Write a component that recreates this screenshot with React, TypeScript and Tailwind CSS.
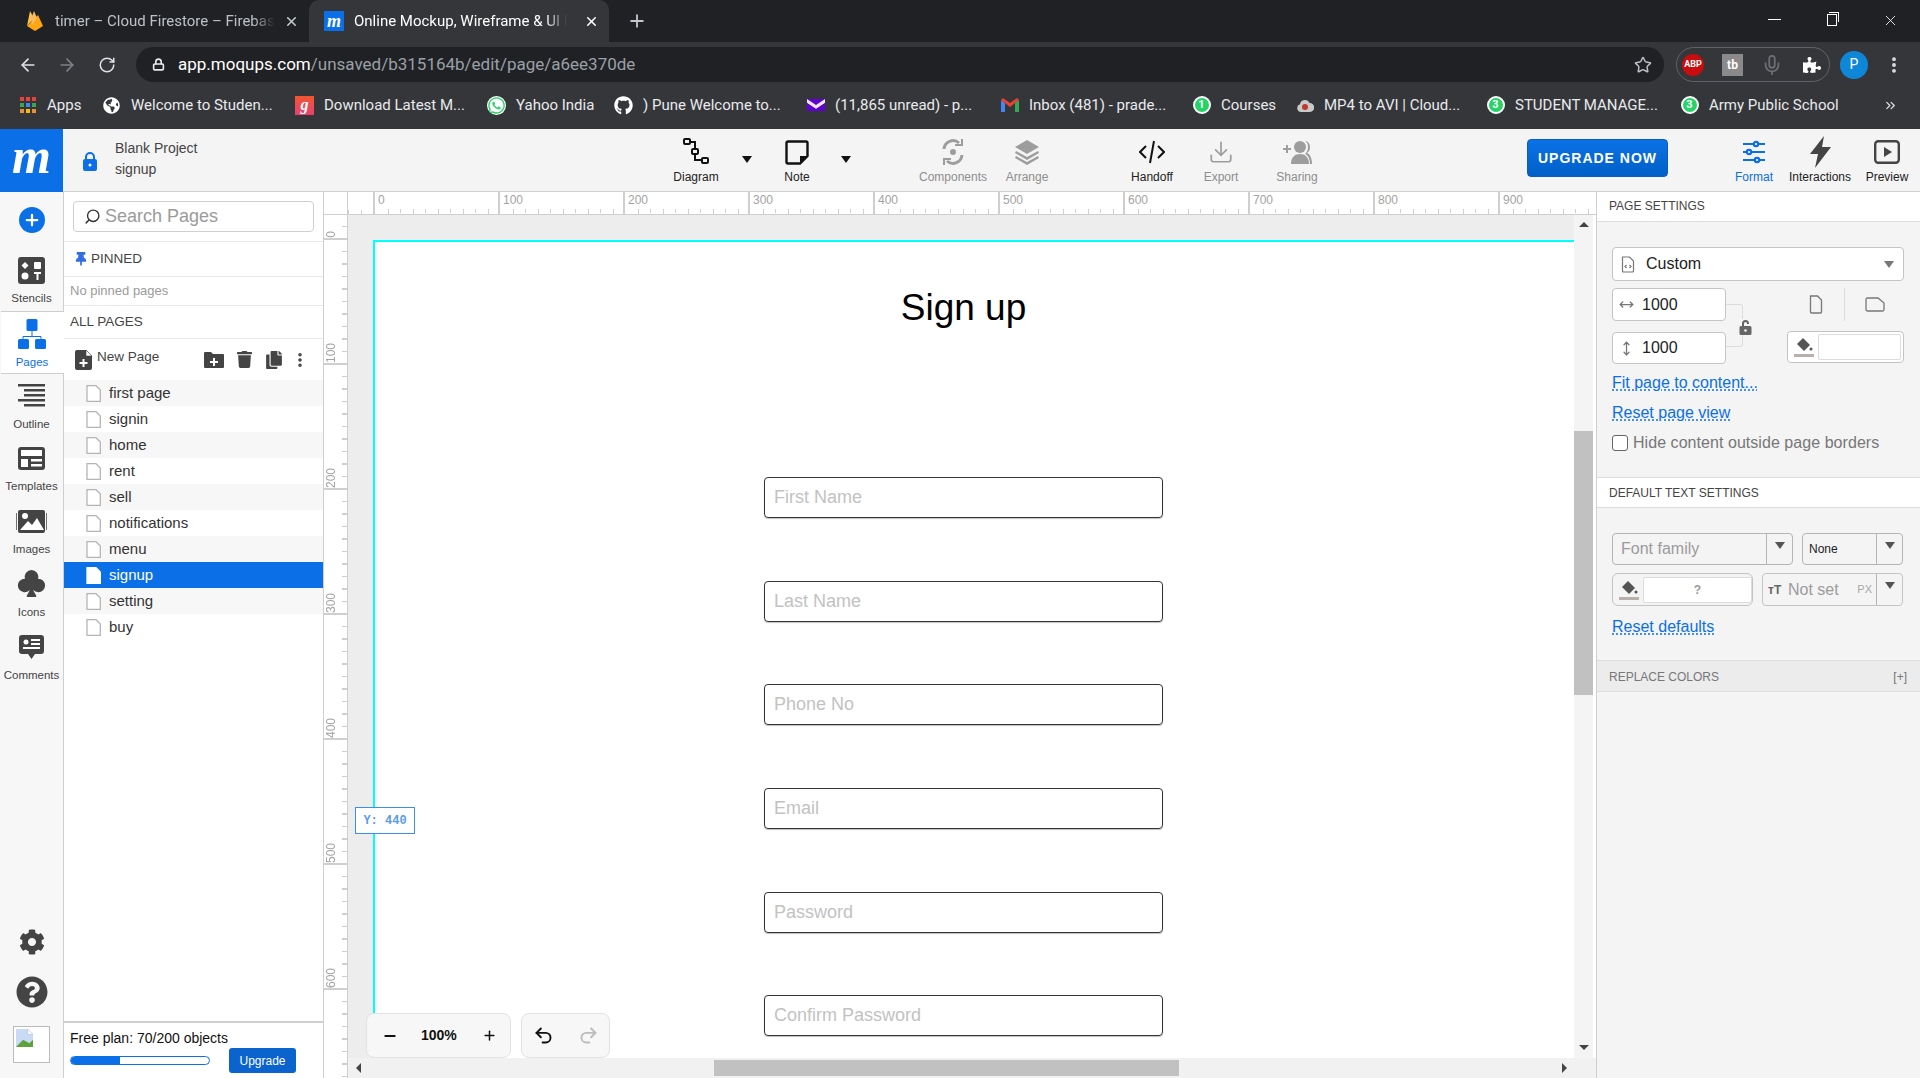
import React from 'react';
import { ArrowLeft, ArrowRight, RotateCw, Plus, X, Star, Minus, Undo2, Redo2, Download, ChevronsRight, Mic, EllipsisVertical, Lock, Search, MoveHorizontal, MoveVertical } from 'lucide-react';
import { FaCog, FaQuestionCircle, FaGithub, FaWhatsapp, FaThumbtack, FaGlobeAmericas, FaPuzzlePiece, FaTrash, FaCopy } from 'react-icons/fa';
import { BsSuitClubFill } from 'react-icons/bs';

const UI_FONT = "font-['Liberation_Sans',Arial,sans-serif]";

const bookmarks = [
    { label: 'Apps', width: 'w-[84px]', icon: 'apps' },
    { label: 'Welcome to Studen...', width: 'w-[193px]', icon: 'globe' },
    { label: 'Download Latest M...', width: 'w-[192px]', icon: 'gaana' },
    { label: 'Yahoo India', width: 'w-[127px]', icon: 'wa' },
    { label: ') Pune Welcome to...', width: 'w-[192px]', icon: 'github' },
    { label: '(11,865 unread) - p...', width: 'w-[194px]', icon: 'yahoo' },
    { label: 'Inbox (481) - prade...', width: 'w-[192px]', icon: 'gmail' },
    { label: 'Courses', width: 'w-[103px]', icon: 'wa1' },
    { label: 'MP4 to AVI | Cloud...', width: 'w-[191px]', icon: 'cloud' },
    { label: 'STUDENT MANAGE...', width: 'w-[194px]', icon: 'wa3' },
    { label: 'Army Public School', width: 'w-[170px]', icon: 'wa3' },
];

const pages = ['first page', 'signin', 'home', 'rent', 'sell', 'notifications', 'menu', 'signup', 'setting', 'buy'];
const fields = ['First Name', 'Last Name', 'Phone No', 'Email', 'Password', 'Confirm Password'];

const Caret = ({ className = 'border-t-[#333]' }: { className?: string }) => (
    <span className={`block w-0 h-0 border-x-[5px] border-x-transparent border-t-[7px] ${className}`} />
);

const BadgeNum = ({ n }: { n: string }) => (
    <span className="relative flex w-[18px] h-[18px] items-center justify-center rounded-full bg-[#25d366] text-[11px] font-bold text-white border-2 border-white">{n}</span>
);

const BookmarkIcon = ({ icon }: { icon: string }) => {
    switch (icon) {
        case 'apps':
            return (
                <svg width="16" height="16" viewBox="0 0 16 16">
                    {[0, 6, 12].map(y => [0, 6, 12].map((x, i) => (
                        <rect key={`${x}-${y}`} x={x} y={y} width="4" height="4" fill={y === 0 ? '#ea4335' : y === 6 ? (i === 1 ? '#4285f4' : '#34a853') : (i === 1 ? '#fbbc05' : '#ea8f35')} />
                    )))}
                </svg>
            );
        case 'globe':
            return <FaGlobeAmericas className="text-white" size={17} />;
        case 'gaana':
            return <span className="flex w-[19px] h-[19px] items-center justify-center bg-gradient-to-b from-[#f0562b] to-[#e83f6f] text-[16px] font-bold italic text-white font-['Liberation_Serif',serif]">g</span>;
        case 'wa':
            return <FaWhatsapp className="text-[#25d366] bg-white rounded-full" size={19} />;
        case 'wa1':
            return <BadgeNum n="1" />;
        case 'wa3':
            return <BadgeNum n="3" />;
        case 'github':
            return <FaGithub className="text-white" size={19} />;
        case 'yahoo':
            return (
                <svg width="18" height="16" viewBox="0 0 18 16">
                    <path d="M0 2h18v12H0z" fill="#6001d2" />
                    <path d="M0 2l9 6 9-6v4l-9 6-9-6z" fill="#fff" opacity="0.9" />
                    <path d="M0 6l9 6 9-6v8H0z" fill="#6001d2" />
                </svg>
            );
        case 'gmail':
            return (
                <svg width="18" height="14" viewBox="0 0 18 14">
                    <path d="M0 2v12h4V5z" fill="#4285f4" />
                    <path d="M18 2v12h-4V5z" fill="#34a853" />
                    <path d="M0 2l2-2 7 5 7-5 2 2-4 3-5 4-5-4z" fill="#ea4335" />
                </svg>
            );
        case 'cloud':
            return (
                <svg width="18" height="13" viewBox="0 0 18 13">
                    <path d="M5 13a4 4 0 0 1-1-7.800A5 5 0 0 1 13.500 4 4.500 4.500 0 0 1 14 13z" fill="#c9c9c9" />
                    <circle cx="9" cy="8" r="3" fill="#c0392b" />
                </svg>
            );
        default:
            return null;
    }
};

const TabStrip = () => (
    <div className="h-[42px] bg-[#202124] flex items-end flex-none font-['Roboto',sans-serif] text-[15px]">
        <div className="w-[309px] h-[42px] flex items-center pl-[27px] pr-[10px] text-[#bdc1c6]">
            <svg width="16" height="22" viewBox="0 0 16 22" className="flex-none">
                <path d="M0 16L3 1l4 7-7 8z" fill="#ffc24a" />
                <path d="M0 16L11 5l5 11-8 5z" fill="#ffa712" />
                <path d="M4 9l3-8 3 7-5 7z" fill="#f4bd62" />
            </svg>
            <span className="ml-[12px] w-[220px] whitespace-nowrap overflow-hidden [mask-image:linear-gradient(to_right,black_90%,transparent)]">timer – Cloud Firestore – Firebase</span>
            <X size={15} strokeWidth={2.5} className="ml-auto text-[#c4c7cb]" />
        </div>
        <div className="w-[300px] h-[42px] rounded-t-[10px] bg-[#35363a] flex items-center pl-[15px] pr-[10px] text-white">
            <span className="flex-none flex w-[20px] h-[20px] items-center justify-center bg-[#0b6fe8] text-[18px] leading-none font-bold italic font-['Liberation_Serif',serif]">m</span>
            <span className="ml-[10px] w-[213px] whitespace-nowrap overflow-hidden [mask-image:linear-gradient(to_right,black_90%,transparent)]">Online Mockup, Wireframe &amp; UI Mockup</span>
            <X size={15} strokeWidth={2.5} className="ml-auto text-white" />
        </div>
        <div className="h-[42px] flex items-center ml-[18px] text-[#c4c7cb]">
            <Plus size={20} strokeWidth={2.2} />
        </div>
        <div className="ml-auto h-[42px] flex items-start pt-[18px] text-white">
            <span className="block w-[13px] h-px bg-white mt-px mr-[46px]" />
            <span className="relative block w-[10px] h-[12px] border border-white mt-[-4px] mr-[45px]">
                <span className="absolute -top-[3px] -right-[3px] w-[10px] h-[10px] border-t border-r border-white" />
            </span>
            <X size={17} strokeWidth={1.2} className="mr-[21px] mt-[-6px]" />
        </div>
    </div>
);

const AddressBar = () => (
    <div className="h-[42px] bg-[#35363a] flex items-center flex-none pt-[3px] font-['Roboto',sans-serif]">
        <ArrowLeft size={20} className="ml-[18px] text-[#dee1e6]" />
        <ArrowRight size={20} className="ml-[19px] text-[#7d8085]" />
        <RotateCw size={18} className="ml-[21px] text-[#dee1e6]" />
        <div className="ml-[20px] w-[1528px] h-[35px] rounded-full bg-[#202124] flex items-center pl-[16px] pr-[12px] text-[17px]">
            <Lock size={13} strokeWidth={3} className="text-[#e8eaed]" />
            <span className="ml-[13px] text-white">app.moqups.com</span>
            <span className="text-[#9aa0a6]">/unsaved/b315164b/edit/page/a6ee370de</span>
            <Star size={18} className="ml-auto text-[#bdc1c6]" />
        </div>
        <div className="ml-[12px] w-[154px] h-[35px] rounded-full border border-[#5f6368] flex items-center pl-[5px]">
            <span className="flex w-[22px] h-[22px] items-center justify-center rounded-full bg-[#c70d0d] text-white text-[9px] font-bold">ABP</span>
            <span className="ml-[18px] flex w-[21px] h-[22px] items-center justify-center bg-[#8a8a8a] text-white text-[12px] font-bold">tb</span>
            <Mic size={22} className="ml-[18px] text-[#6b6e72]" />
            <FaPuzzlePiece size={18} className="ml-[20px] text-white" />
        </div>
        <span className="ml-[10px] flex w-[28px] h-[28px] items-center justify-center rounded-full bg-[#0f87d8] text-white text-[14px]">P</span>
        <EllipsisVertical size={20} strokeWidth={2.6} className="ml-[16px] text-[#dee1e6]" />
    </div>
);

const BookmarkBar = () => (
    <div className="h-[45px] bg-[#35363a] flex items-center pl-[18px] pb-[3px] flex-none text-[15px] text-[#e8eaed] font-['Roboto',sans-serif]">
        {bookmarks.map(b => (
            <div key={b.label} className={`${b.width} flex-none flex items-center`}>
                <span className="w-[19px] flex-none flex items-center justify-center"><BookmarkIcon icon={b.icon} /></span>
                <span className="ml-[10px] whitespace-nowrap">{b.label}</span>
            </div>
        ))}
        <ChevronsRight size={15} className="ml-auto mr-[22px] text-[#dee1e6]" />
    </div>
);

const DiagramIcon = () => (
    <svg width="26" height="28" viewBox="0 0 26 28" fill="none" stroke="#111" strokeWidth="2">
        <rect x="1" y="1" width="6" height="5" rx="1" />
        <rect x="9" y="11" width="6" height="5" rx="1" />
        <rect x="19" y="20" width="6" height="5" rx="1" />
        <path d="M7 4h5v7M12 16v6h7" />
    </svg>
);

const NoteIcon = () => (
    <svg width="24" height="25" viewBox="0 0 24 25" fill="none">
        <path d="M3 1.500h18a1.500 1.500 0 0 1 1.500 1.500v13L15 23.500H3A1.500 1.500 0 0 1 1.500 22V3A1.500 1.500 0 0 1 3 1.500z" stroke="#111" strokeWidth="2.400" />
        <path d="M15 23v-7h8z" fill="#111" />
    </svg>
);

const ComponentsIcon = () => (
    <svg width="26" height="28" viewBox="0 0 26 28" fill="none" stroke="#9d9d9d" strokeWidth="3">
        <path d="M4 11a9 9 0 0 1 15-6M22 17a9 9 0 0 1-15 6" />
        <path d="M15 7h7V1M11 21H4v6" strokeWidth="2" />
        <circle cx="13" cy="14" r="3" fill="#9d9d9d" stroke="none" />
    </svg>
);

const ArrangeIcon = () => (
    <svg width="26" height="26" viewBox="0 0 26 26" fill="#9d9d9d">
        <path d="M13 1l12 7-12 7L1 8z" />
        <path d="M2 12l11 6 11-6 1 2-12 7-12-7z" />
        <path d="M2 17l11 6 11-6 1 2-12 7-12-7z" />
    </svg>
);

const HandoffIcon = () => (
    <svg width="26" height="24" viewBox="0 0 26 24" fill="none" stroke="#111" strokeWidth="2">
        <path d="M7 6l-6 6 6 6M19 6l6 6-6 6M15 1l-4 22" />
    </svg>
);

const SharingIcon = () => (
    <svg width="32" height="24" viewBox="0 0 32 24" fill="#9d9d9d">
        <path d="M2 8h3V5h2v3h3v2H7v3H5v-3H2z" />
        <circle cx="19" cy="7" r="6" />
        <path d="M10 24c0-7 4-10 9-10s9 3 9 10z" />
        <path d="M24 1c3 0 5 3 5 6s-1 5-3 6c3 1 5 5 5 11h-2c0-5-2-9-5-10 2-2 3-4 3-7s-1-5-3-6z" />
    </svg>
);

const FormatIcon = () => (
    <svg width="24" height="24" viewBox="0 0 24 24" fill="#fff" stroke="#0b6fe8" strokeWidth="2.200">
        <path d="M1 4h22M1 12h22M1 20h22" />
        <circle cx="14" cy="4" r="2.200" />
        <circle cx="7" cy="12" r="2.200" />
        <circle cx="15" cy="20" r="2.200" />
    </svg>
);

const BoltIcon = () => (
    <svg width="21" height="32" viewBox="0 0 21 32" fill="#444">
        <path d="M14 0L0 18h8L5 32l16-21h-9z" />
    </svg>
);

const PreviewIcon = () => (
    <svg width="26" height="24" viewBox="0 0 26 24" fill="none">
        <rect x="1.200" y="1.200" width="23.600" height="21.600" rx="3" stroke="#444" strokeWidth="2.400" />
        <path d="M10 7l8 5-8 5z" fill="#444" />
    </svg>
);

const ToolButton = ({ label, width, icon, dim, active, ml }: { label: string; width: string; icon: React.ReactNode; dim?: boolean; active?: boolean; ml?: string }) => (
    <div className={`${width} ${ml ?? ''} flex-none h-full flex flex-col items-center`}>
        <div className="h-[36px] mt-[5px] flex items-center justify-center">{icon}</div>
        <span className={`text-[12px] leading-[14px] whitespace-nowrap ${active ? 'text-[#0b6fe8]' : dim ? 'text-[#8e8e8e]' : 'text-[#222]'}`}>{label}</span>
    </div>
);

const Header = () => (
    <div className="h-[63px] flex-none flex bg-[#f4f4f4] border-b border-[#cfcfcf]">
        <div className="w-[63px] h-[63px] flex-none bg-[#0b6fe8] flex items-center justify-center text-white text-[50px] leading-none pb-[10px] font-bold italic font-['Liberation_Serif',serif]">m</div>
        <svg width="16" height="20" viewBox="0 0 16 20" className="ml-[19px] mt-[22px] flex-none">
            <path d="M3 8V6a5 5 0 0 1 10 0v2h-2V6a3 3 0 0 0-6 0v2z" fill="#0b6fe8" />
            <rect x="1" y="8" width="14" height="12" rx="2" fill="#0b6fe8" />
            <circle cx="8" cy="14" r="1.500" fill="#fff" />
        </svg>
        <div className="ml-[17px] w-[199px] flex-none flex flex-col pt-[9px] text-[14px] leading-[21px] text-[#444]">
            <span>Blank Project</span>
            <span>signup</span>
        </div>
        <ToolButton label="Diagram" width="w-[70px]" ml="ml-[347px]" icon={<DiagramIcon />} />
        <div className="w-[32px] flex-none flex justify-center pt-[27px]"><Caret className="border-t-[#111]" /></div>
        <ToolButton label="Note" width="w-[68px]" icon={<NoteIcon />} />
        <div className="w-[30px] flex-none flex justify-center pt-[27px]"><Caret className="border-t-[#111]" /></div>
        <ToolButton label="Components" width="w-[76px]" ml="ml-[54px]" dim icon={<ComponentsIcon />} />
        <ToolButton label="Arrange" width="w-[72px]" dim icon={<ArrangeIcon />} />
        <ToolButton label="Handoff" width="w-[62px]" ml="ml-[58px]" icon={<HandoffIcon />} />
        <ToolButton label="Export" width="w-[76px]" dim icon={<Download size={26} strokeWidth={1.6} className="text-[#9d9d9d]" />} />
        <ToolButton label="Sharing" width="w-[76px]" dim icon={<SharingIcon />} />
        <div className="ml-[192px] mt-[10px] flex-none w-[141px] h-[38px] rounded-[4px] bg-gradient-to-b from-[#0b72e6] to-[#0060c8] border border-[#0a5cc0] flex items-center justify-center text-white text-[14px] font-bold tracking-[1px]">UPGRADE NOW</div>
        <ToolButton label="Format" width="w-[60px]" ml="ml-[56px]" active icon={<FormatIcon />} />
        <ToolButton label="Interactions" width="w-[72px]" icon={<BoltIcon />} />
        <ToolButton label="Preview" width="w-[62px]" icon={<PreviewIcon />} />
    </div>
);

const RailItem = ({ label, icon, active }: { label: string; icon: React.ReactNode; active?: boolean }) => (
    <div className={`h-[62.8px] w-full flex flex-col items-center ${active ? 'bg-white border-y border-[#cfcfcf] w-[64px] -mr-px z-10 relative' : ''}`}>
        <div className="h-[38px] mt-[3px] flex items-center justify-center">{icon}</div>
        <span className={`mt-[2px] text-[11.5px] leading-[15px] ${active ? 'text-[#0b6fe8]' : 'text-[#444]'}`}>{label}</span>
    </div>
);

const Rail = () => (
    <div className="w-[64px] flex-none bg-[#f7f7f7] border-r border-[#cfcfcf] flex flex-col items-center">
        <div className="h-[56px] flex items-center justify-center">
            <span className="flex w-[26px] h-[26px] items-center justify-center rounded-full bg-[#0b6fe8] text-white"><Plus size={18} strokeWidth={3} /></span>
        </div>
        <RailItem label="Stencils" icon={
            <svg width="27" height="27" viewBox="0 0 27 27">
                <rect width="27" height="27" rx="3" fill="#444" />
                <path d="M7 5l3.500 3.500L7 12 3.500 8.500z" fill="#fff" />
                <rect x="16" y="5" width="7" height="7" rx="1" fill="#fff" />
                <circle cx="7" cy="19" r="3.500" fill="#fff" />
                <path d="M16 15h7v2h-2.500v6h-2v-6H16z" fill="#fff" />
            </svg>
        } />
        <RailItem label="Pages" active icon={
            <svg width="28" height="30" viewBox="0 0 28 30" fill="#0b6fe8">
                <rect x="8.500" y="0" width="11" height="12" rx="1.500" />
                <path d="M14 12v5M5 21v-3.500h18V21" fill="none" stroke="#0b6fe8" strokeWidth="1" />
                <rect x="0" y="20" width="11" height="10" rx="1.500" />
                <rect x="17" y="20" width="11" height="10" rx="1.500" />
            </svg>
        } />
        <RailItem label="Outline" icon={
            <svg width="27" height="23" viewBox="0 0 27 23" fill="#444">
                <rect x="0" y="0" width="27" height="2.500" />
                <rect x="6" y="5" width="21" height="2.500" />
                <rect x="6" y="10" width="21" height="2.500" />
                <rect x="0" y="15" width="27" height="2.500" />
                <rect x="6" y="20" width="21" height="2.500" />
            </svg>
        } />
        <RailItem label="Templates" icon={
            <svg width="27" height="23" viewBox="0 0 27 23">
                <rect width="27" height="23" rx="3" fill="#444" />
                <rect x="3" y="3" width="21" height="6" fill="#fff" />
                <rect x="3" y="12" width="7" height="8" fill="#fff" />
                <rect x="13" y="12" width="11" height="2.500" fill="#fff" />
                <rect x="13" y="17" width="11" height="2.500" fill="#fff" />
            </svg>
        } />
        <RailItem label="Images" icon={
            <svg width="31" height="23" viewBox="0 0 31 23">
                <rect x="2" y="0" width="27" height="23" rx="2" fill="#444" />
                <path d="M0 3v17M31 3v17" stroke="#444" strokeWidth="1.500" />
                <circle cx="9" cy="6" r="3" fill="#fff" />
                <path d="M4 20l8-9 4 4 5-7 7 12z" fill="#fff" />
            </svg>
        } />
        <RailItem label="Icons" icon={<BsSuitClubFill size={31} className="text-[#444]" />} />
        <RailItem label="Comments" icon={
            <svg width="25" height="24" viewBox="0 0 25 24" fill="#444">
                <path d="M3 0h19a3 3 0 0 1 3 3v13a3 3 0 0 1-3 3h-6l-3.500 5L9 19H3a3 3 0 0 1-3-3V3a3 3 0 0 1 3-3z" />
                <circle cx="7" cy="7" r="2.500" fill="#fff" />
                <rect x="12" y="4" width="9" height="2" fill="#fff" />
                <rect x="12" y="8" width="9" height="2" fill="#fff" />
                <rect x="4" y="12" width="17" height="2" fill="#fff" />
            </svg>
        } />
        <div className="mt-auto flex flex-col items-center">
            <FaCog size={26} className="text-[#444] mb-[21px]" />
            <FaQuestionCircle size={32} className="text-[#444] mb-[18px]" />
            <div className="w-[37px] h-[37px] mb-[15px] border border-[#bbb] bg-white p-[2px]">
                <svg width="17" height="18" viewBox="0 0 19 20">
                    <path d="M0 0h13l6 6v14H0z" fill="#c8daf5" />
                    <path d="M0 20l8-8 7 4 4-4v8z" fill="#5ca33e" />
                    <path d="M13 0v6h6z" fill="#fff" stroke="#aaa" strokeWidth="0.500" />
                </svg>
            </div>
        </div>
    </div>
);

const PageGlyph = ({ filled }: { filled?: boolean }) => (
    <svg width="15" height="17" viewBox="0 0 15 17" className="flex-none">
        <path d="M1 .7h9l4.300 4.300v11.300H1z" fill="#fff" stroke={filled ? '#fff' : '#b5b5b5'} strokeWidth="1.300" />
    </svg>
);

const PagesPanel = () => (
    <div className="w-[260px] flex-none bg-white border-r border-[#cfcfcf] flex flex-col text-[#444]">
        <div className="h-[50px] flex-none px-[9px] pt-[9px] border-b border-[#e8e8e8]">
            <div className="h-[31px] w-[241px] rounded-[4px] border border-[#cfcfcf] flex items-center pl-[10px]">
                <Search size={17} strokeWidth={2} className="text-[#333] -scale-x-100" />
                <span className="ml-[4px] text-[18px] text-[#9b9b9b]">Search Pages</span>
            </div>
        </div>
        <div className="h-[35px] flex-none flex items-center pl-[10px] border-b border-[#e8e8e8] text-[13.5px]">
            <FaThumbtack size={14} className="text-[#2f6fe0]" />
            <span className="ml-[3px]">PINNED</span>
        </div>
        <div className="h-[29px] flex-none flex items-center pl-[6px] border-b border-[#e8e8e8] text-[13px] text-[#9b9b9b]">No pinned pages</div>
        <div className="h-[33px] flex-none flex items-center pl-[6px] border-b border-[#e8e8e8] text-[13.5px]">ALL PAGES</div>
        <div className="h-[41px] flex-none flex items-center pl-[11px] text-[13.5px]">
            <svg width="17" height="20" viewBox="0 0 17 20" className="flex-none">
                <path d="M2 0h9l6 6v12a2 2 0 0 1-2 2H2a2 2 0 0 1-2-2V2a2 2 0 0 1 2-2z" fill="#444" />
                <path d="M7.500 9h2v3h3v2h-3v3h-2v-3h-3v-2h3z" fill="#fff" />
                <path d="M11 0v6h6z" fill="#fff" stroke="#444" strokeWidth="0.600" />
            </svg>
            <span className="ml-[5px] mb-[4px]">New Page</span>
            <svg width="20" height="17" viewBox="0 0 20 17" className="ml-[45px] flex-none">
                <path d="M0 2a1 1 0 0 1 1-1h6l2 2h10a1 1 0 0 1 1 1v12a1 1 0 0 1-1 1H1a1 1 0 0 1-1-1z" fill="#444" />
                <path d="M9 7h2v3h3v2h-3v3H9v-3H6v-2h3z" fill="#fff" />
            </svg>
            <FaTrash size={17} className="ml-[12px] text-[#444]" />
            <FaCopy size={18} className="ml-[12px] text-[#444]" />
            <EllipsisVertical size={18} strokeWidth={2.8} className="ml-[8px] text-[#444]" />
        </div>
        <div className="flex flex-col">
            {pages.map((p, i) => (
                <div key={p} className={`h-[26px] flex items-center pl-[22px] text-[15px] ${p === 'signup' ? 'bg-[#0b6fe8] text-white' : i % 2 === 0 ? 'bg-[#f7f7f7] text-[#333]' : 'bg-white text-[#333]'}`}>
                    <PageGlyph filled={p === 'signup'} />
                    <span className="ml-[8px]">{p}</span>
                </div>
            ))}
        </div>
        <div className="mt-auto h-[57px] flex-none border-t-2 border-[#cfcfcf] pl-[6px] pr-[5px] pt-[6px]">
            <div className="text-[14px] leading-[18px] text-[#111]">Free plan: 70/200 objects</div>
            <div className="flex items-center mt-[1px]">
                <div className="w-[140px] h-[9px] rounded-full border border-[#0b6fe8] overflow-hidden bg-white">
                    <div className="w-[49px] h-full bg-[#0b6fe8]" />
                </div>
                <div className="ml-[19px] w-[67px] h-[25px] rounded-[3px] bg-[#0b63ce] text-white text-[12px] flex items-center justify-center">Upgrade</div>
            </div>
        </div>
    </div>
);

const rulerMarks = [0, 100, 200, 300, 400, 500, 600, 700, 800, 900];
const tickSlots = [0, 1, 2, 3, 4, 5, 6, 7, 8, 9];

const HorizontalRuler = () => (
    <div className="h-[23px] flex-none flex bg-white border-b border-[#cfcfcf] overflow-hidden">
        <div className="w-[24px] flex-none border-r border-[#cfcfcf]" />
        <div className="w-[25px] flex-none flex items-end justify-end">
            {tickSlots.slice(0, 2).map(t => (
                <span key={t} className="w-[12.5px] flex-none h-[4px] border-l border-[#cfcfcf]" />
            ))}
        </div>
        {rulerMarks.map(m => (
            <div key={m} className="w-[125px] flex-none border-l-2 border-[#cfcfcf] relative">
                <span className="block pl-[3px] pt-[1px] text-[12px] leading-[14px] text-[#a3a3a3]">{m}</span>
                <div className="absolute bottom-0 left-0 flex">
                    {tickSlots.map(t => (
                        <span key={t} className={`w-[12.5px] flex-none border-l border-[#cfcfcf] ${t % 2 === 1 ? 'h-[5px]' : 'h-[4px]'} ${t === 0 ? 'border-l-0' : ''}`} />
                    ))}
                </div>
            </div>
        ))}
    </div>
);

const VerticalRuler = () => (
    <div className="w-[24px] flex-none flex flex-col bg-white border-r border-[#cfcfcf] overflow-hidden">
        {rulerMarks.slice(0, 8).map((m, i) => (
            <div key={m} className={`${i === 0 ? 'h-[25px]' : 'h-[125px]'} flex-none flex items-end border-b-2 border-[#cfcfcf] overflow-hidden`}>
                {m < 700 && <span className="[writing-mode:vertical-rl] rotate-180 pb-[3px] pl-[4px] text-[12px] leading-[14px] text-[#a3a3a3]">{m}</span>}
                <div className="ml-auto flex flex-col justify-end items-end">
                    {tickSlots.map(t => (
                        <span key={t} className={`block h-[12.5px] flex-none border-t border-[#cfcfcf] ${t % 2 === 1 ? 'w-[5px]' : 'w-[5px] border-t-2'} ${t === 0 ? 'border-t-0' : ''}`} />
                    ))}
                </div>
            </div>
        ))}
    </div>
);

const ScrollArrow = ({ dir }: { dir: 'up' | 'down' | 'left' | 'right' }) => {
    const shape = {
        up: 'border-x-[5px] border-x-transparent border-b-[5px] border-b-[#444]',
        down: 'border-x-[5px] border-x-transparent border-t-[5px] border-t-[#444]',
        left: 'border-y-[5px] border-y-transparent border-r-[5px] border-r-[#444]',
        right: 'border-y-[5px] border-y-transparent border-l-[5px] border-l-[#444]',
    }[dir];
    return <span className={`block w-0 h-0 ${shape}`} />;
};

const Workspace = () => (
    <div className="flex-1 min-w-0 flex flex-col">
        <HorizontalRuler />
        <div className="flex-1 min-h-0 flex">
            <VerticalRuler />
            <div className="flex-1 min-w-0 flex flex-col">
                <div className="flex-1 min-h-0 flex">
                    <div className="relative flex-1 min-w-0 bg-[#ededed] overflow-hidden pl-[25px] pt-[25px]">
                        <div className="h-[1000px] bg-white border-l-2 border-t-2 border-[#00ffff] flex flex-col">
                            <div className="w-[1177px] flex flex-col items-center pt-[45px]">
                                <h1 className="text-[37px] leading-[42px] text-black">Sign up</h1>
                                <div className="mt-[148px] flex flex-col gap-[62.7px]">
                                    {fields.map(f => (
                                        <div key={f} className="w-[399px] h-[41px] rounded-[4px] border border-[#333] flex items-center pl-[9px] text-[18px] text-[#c2c2c2] shadow-[0_1px_1px_rgba(0,0,0,0.25)]">{f}</div>
                                    ))}
                                </div>
                            </div>
                        </div>
                        <div className="absolute left-[7px] top-[592px] w-[60px] h-[27px] bg-white border border-[#3b8ff0] flex items-center justify-center text-[12px] font-bold text-[#5a9bea] font-['Liberation_Mono',monospace]">Y: 440</div>
                        <div className="absolute left-[18px] bottom-0 flex gap-[10px]">
                            <div className="w-[145px] h-[45px] rounded-[8px] border border-[#e2e2e2] bg-[#f7f7f7] flex items-center text-[#111]">
                                <Minus size={16} strokeWidth={3} className="ml-[15px]" />
                                <span className="ml-[23px] text-[14px] font-bold">100%</span>
                                <Plus size={15} strokeWidth={2.4} className="ml-[25px]" />
                            </div>
                            <div className="w-[89px] h-[45px] rounded-[8px] border border-[#e2e2e2] bg-[#f7f7f7] flex items-center">
                                <Undo2 size={21} strokeWidth={2.2} className="ml-[11px] text-[#111]" />
                                <Redo2 size={21} strokeWidth={2.2} className="ml-[24px] text-[#bcbcbc]" />
                            </div>
                        </div>
                    </div>
                    <div className="w-[22px] flex-none bg-[#f4f4f4] border-r-[3px] border-white flex flex-col items-center justify-between pt-[7px] pb-[8px]">
                        <ScrollArrow dir="up" />
                        <div className="w-full flex-none h-[264px] bg-[#c1c1c1] mt-[204px] mb-auto" />
                        <ScrollArrow dir="down" />
                    </div>
                </div>
                <div className="h-[20px] flex-none bg-[#f1f1f1] flex items-center pl-[8px] pr-[29px]">
                    <ScrollArrow dir="left" />
                    <div className="ml-[353px] w-[465px] h-[16px] bg-[#c1c1c1]" />
                    <span className="ml-auto"><ScrollArrow dir="right" /></span>
                </div>
            </div>
        </div>
    </div>
);

const Dashed = ({ children }: { children: React.ReactNode }) => (
    <span className="text-[16px] leading-[20px] text-[#0b6fe8] underline decoration-dotted underline-offset-2">{children}</span>
);

const SectionTitle = ({ children, raised }: { children: React.ReactNode; raised?: boolean }) => (
    <div className={`h-[30px] flex-none bg-white flex items-center pl-[12px] border-b border-[#dcdcdc] text-[12px] text-[#444] ${raised ? 'pb-[2px]' : ''}`}>{children}</div>
);

const PaintSwatch = ({ width, text }: { width: string; text?: string }) => (
    <>
        <svg width="20" height="20" viewBox="0 0 20 20" className="flex-none">
            <path d="M9 1l7 7-6 6-7-7z" fill="#555" />
            <circle cx="17" cy="12" r="1.500" fill="#555" />
            <rect x="0" y="17" width="20" height="3" fill="#b9b0ab" />
        </svg>
        <div className={`${width} ml-[4px] h-[26px] border border-[#dcdcdc] rounded-[2px] bg-white flex items-center justify-center text-[12px] font-bold text-[#999]`}>{text}</div>
    </>
);

const SettingsPanel = () => (
    <div className="w-[324px] flex-none bg-[#f4f4f4] border-l border-[#cfcfcf] flex flex-col text-[#444]">
        <SectionTitle raised>PAGE SETTINGS</SectionTitle>
        <div className="h-[256px] flex-none pl-[15px] pr-[15px] pt-[25px] border-b border-[#dcdcdc]">
            <div className="w-[292px] h-[34px] rounded-[4px] border border-[#c4c4c4] bg-white flex items-center pl-[8px] pr-[9px] text-[16px] text-[#222]">
                <svg width="14" height="17" viewBox="0 0 14 17" fill="none" stroke="#777" strokeWidth="1.200">
                    <path d="M1.500 1h7l4 4v10a1 1 0 0 1-1 1h-9a1 1 0 0 1-1-1z" />
                    <path d="M5.500 9l-1.500 1.500L5.500 12M8.500 9l1.500 1.500L8.500 12" />
                </svg>
                <span className="ml-[11px]">Custom</span>
                <span className="ml-auto"><Caret className="border-t-[#777]" /></span>
            </div>
            <div className="mt-[7px] flex">
                <div className="flex flex-col gap-[11px]">
                    <div className="w-[114px] h-[33px] rounded-[4px] border border-[#c4c4c4] bg-white flex items-center pl-[6px] text-[16px] text-[#222]">
                        <MoveHorizontal size={15} strokeWidth={2} className="text-[#777]" />
                        <span className="ml-[8px]">1000</span>
                    </div>
                    <div className="w-[114px] h-[32px] rounded-[4px] border border-[#c4c4c4] bg-white flex items-center pl-[6px] text-[16px] text-[#222]">
                        <MoveVertical size={15} strokeWidth={2} className="text-[#777]" />
                        <span className="ml-[8px]">1000</span>
                    </div>
                </div>
                <div className="w-[26px] flex-none flex flex-col items-start pt-[16px]">
                    <span className="block w-[17px] h-[15px] border-t border-r border-[#dcdcdc] rounded-tr-[3px]" />
                    <svg width="13" height="16" viewBox="0 0 13 16" className="ml-[13px] flex-none">
                        <path d="M3 7V4.500a3.500 3.500 0 0 1 7 0V5H8v-.5a1.500 1.500 0 0 0-3 0V7z" fill="#666" />
                        <rect x="0.500" y="7" width="12" height="9" rx="1.500" fill="#666" />
                        <circle cx="6.500" cy="11.500" r="1.300" fill="#f4f4f4" />
                    </svg>
                    <span className="block w-[17px] h-[12px] border-b border-r border-[#dcdcdc] rounded-br-[3px]" />
                </div>
                <div className="ml-[35px] flex flex-col">
                    <div className="h-[33px] flex items-center">
                        <svg width="14" height="19" viewBox="0 0 14 19" fill="none" className="ml-[22px] flex-none"><path d="M1.500 1h7l4 4v12a1 1 0 0 1-1 1h-9a1 1 0 0 1-1-1z" stroke="#777" strokeWidth="1.300" /></svg>
                        <span className="ml-[21px] h-[33px] border-l border-[#dcdcdc]" />
                        <svg width="20" height="15" viewBox="0 0 20 15" fill="none" className="ml-[20px] flex-none"><path d="M1 2.500a1.500 1.500 0 0 1 1.500-1.500H13l6 5v6.500a1.500 1.500 0 0 1-1.500 1.500h-15A1.500 1.500 0 0 1 1 12.500z" stroke="#777" strokeWidth="1.300" /></svg>
                    </div>
                    <div className="mt-[10px] w-[117px] h-[32px] rounded-[4px] border border-[#c4c4c4] bg-white flex items-center pl-[6px]">
                        <PaintSwatch width="w-[83px]" />
                    </div>
                </div>
            </div>
            <div className="mt-[9px] flex flex-col gap-[10px] items-start"><Dashed>Fit page to content...</Dashed><Dashed>Reset page view</Dashed></div>
            <div className="mt-[8px] flex items-center text-[16px] text-[#777]">
                <span className="w-[16px] h-[16px] rounded-[3px] border border-[#666] bg-white" />
                <span className="ml-[5px] tracking-[0.05px]">Hide content outside page borders</span>
            </div>
        </div>
        <SectionTitle>DEFAULT TEXT SETTINGS</SectionTitle>
        <div className="h-[153px] flex-none pl-[15px] pt-[25px] border-b border-[#dcdcdc] flex flex-col">
            <div className="flex gap-[9px]">
                <div className="w-[181px] h-[32px] rounded-[4px] border border-[#b5b5b5] flex items-center pl-[8px] text-[16px] text-[#9b9b9b]">
                    <span>Font family</span>
                    <span className="ml-auto w-[26px] h-full border-l border-[#b5b5b5] flex justify-center pt-[8px]"><Caret className="border-t-[#555]" /></span>
                </div>
                <div className="w-[101px] h-[32px] rounded-[4px] border border-[#b5b5b5] flex items-center pl-[6px] text-[12px] text-[#222]">
                    <span>None</span>
                    <span className="ml-auto w-[26px] h-full border-l border-[#b5b5b5] flex justify-center pt-[8px]"><Caret className="border-t-[#555]" /></span>
                </div>
            </div>
            <div className="mt-[8px] flex gap-[9px]">
                <div className="w-[141px] h-[33px] rounded-[6px] border border-[#c4c4c4] flex items-center pl-[6px]">
                    <PaintSwatch width="w-[109px]" text="?" />
                </div>
                <div className="w-[141px] h-[33px] rounded-[4px] border border-[#c4c4c4] flex items-center pl-[5px] text-[16px] text-[#9b9b9b]">
                    <span className="text-[12px] font-bold text-[#666] w-[14px]">тT</span>
                    <span className="ml-[6px]">Not set</span>
                    <span className="ml-auto text-[11px] text-[#a8a8a8] mr-[4px]">PX</span>
                    <span className="w-[26px] h-full border-l border-[#b5b5b5] flex justify-center pt-[8px]"><Caret className="border-t-[#555]" /></span>
                </div>
            </div>
            <div className="mt-[9px]"><Dashed>Reset defaults</Dashed></div>
        </div>
        <div className="h-[31px] flex-none bg-[#ececec] border-b border-[#dcdcdc] flex items-center justify-between pl-[12px] pr-[13px] pt-[1px] text-[12px] text-[#777]">
            <span>REPLACE COLORS</span>
            <span>[+]</span>
        </div>
    </div>
);

export default function App() {
    return (
        <div className={`w-[1920px] h-[1078px] overflow-hidden flex flex-col bg-white ${UI_FONT}`}>
            <TabStrip />
            <AddressBar />
            <BookmarkBar />
            <Header />
            <div className="flex-1 min-h-0 flex">
                <Rail />
                <PagesPanel />
                <Workspace />
                <SettingsPanel />
            </div>
        </div>
    );
}
